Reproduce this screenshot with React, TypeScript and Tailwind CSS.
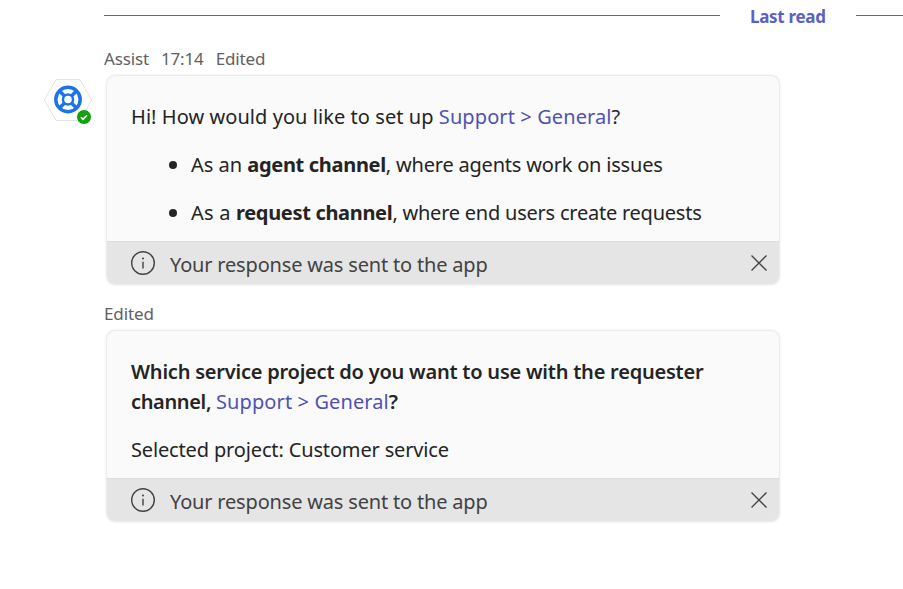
const font = { fontFamily: '"Noto Sans", sans-serif' };

const InfoIcon = () => (
  <svg width="26" height="26" viewBox="0 0 26 26" fill="none" className="shrink-0">
    <circle cx="13" cy="13" r="11.3" stroke="#424242" strokeWidth="1.4" />
    <circle cx="13" cy="8.6" r="1" fill="#424242" />
    <path d="M13 11.8v6.6" stroke="#424242" strokeWidth="1.4" />
  </svg>
);

const CloseIcon = () => (
  <svg width="18" height="18" viewBox="0 0 18 18" fill="none" className="shrink-0">
    <path d="M1.5 1.5l15 15M16.5 1.5l-15 15" stroke="#424242" strokeWidth="1.4" />
  </svg>
);

const Avatar = () => (
  <div className="relative h-[42px] w-[48px] shrink-0">
    <svg width="48" height="42" viewBox="0 0 48 42" fill="none">
      <path d="M12 0.5h24L47.500 21 36 41.500H12L0.500 21z" fill="#fff" stroke="#e3e3e3" />
      <circle cx="24" cy="20.500" r="12.200" stroke="#1a73e8" strokeWidth="3.500" />
      <circle cx="24" cy="20.500" r="5" stroke="#1a73e8" strokeWidth="2.500" />
      <path d="M16 12.500l4.500 4.500M32 12.500L27.500 17M16 28.500l4.500-4.500M32 28.500L27.500 24" stroke="#1a73e8" strokeWidth="3.500" />
    </svg>
    <div className="absolute left-[32px] top-[30px] h-[16px] w-[16px] rounded-full border border-white bg-[#13a10e]">
      <svg width="14" height="14" viewBox="0 0 14 14" fill="none">
        <path d="M4 7.300l2 2 4-4" stroke="#fff" strokeWidth="1.600" />
      </svg>
    </div>
  </div>
);

const Notice = () => (
  <div className="flex h-[43px] items-center rounded-b-[8px] border-t border-[#dcdcdc] bg-[#e5e5e5] pl-[23px] pr-[11px] text-[#424242]">
    <InfoIcon />
    <span className="ml-[14px] flex-1 pt-[3px] text-[20px] tracking-[-0.18px]">Your response was sent to the app</span>
    <CloseIcon />
  </div>
);

const Card = ({ children }: { children: React.ReactNode }) => (
  <div className="ml-[3px] w-[672px] rounded-[8px] bg-[#fafafa] shadow-[0_0_3px_rgba(0,0,0,0.22)]">
    {children}
    <Notice />
  </div>
);

const Link = ({ children }: { children: React.ReactNode }) => (
  <span className="font-normal tracking-[0.1px] text-[#4f52b2]">{children}</span>
);

const Bullet = ({ children }: { children: React.ReactNode }) => (
  <li className="flex items-center">
    <div className="mr-[14px] h-[8px] w-[8px] shrink-0 rounded-full bg-[#242424]" />
    <div>{children}</div>
  </li>
);

export default function App() {
  return (
    <div style={font} className="h-[589px] w-[903px] overflow-hidden bg-white text-[20px] leading-[30px] text-[#242424]">
      <div className="flex h-[32px] items-center pl-[104px]">
        <div className="-mt-[2px] h-px w-[616px] bg-[#5b5fc7]" />
        <div className="mx-[30px] w-[76px] whitespace-nowrap pt-[2px] text-[17px] font-bold tracking-[-0.3px] text-[#5b5fc7]">Last read</div>
        <div className="-mt-[2px] h-px flex-1 bg-[#5b5fc7]" />
      </div>
      <div className="flex pl-[44px] pt-[15px]">
        <div className="w-[60px] pt-[32px]">
          <Avatar />
        </div>
        <div>
          <div className="flex h-[24px] gap-[12px] text-[17px] leading-[24px] tracking-[-0.15px] text-[#616161]">
            <span>Assist</span>
            <span>17:14</span>
            <span>Edited</span>
          </div>
          <div className="mt-[5px]">
            <Card>
              <div className="px-[24px] pb-[13px] pt-[26px]">
                <p className="tracking-[0.06px]">
                  <span>Hi! How would you like to set up </span>
                  <Link>Support &gt; General</Link>
                  <span>?</span>
                </p>
                <ul className="mt-[18px] flex flex-col gap-[18px] pl-[38px] tracking-[-0.2px]">
                  <Bullet>
                    <span className="tracking-[0px]">As an </span>
                    <b className="font-bold tracking-[-0.32px]">agent channel</b>
                    <span>, where agents work on issues</span>
                  </Bullet>
                  <Bullet>
                    <span className="tracking-[0.2px]">As a </span>
                    <b className="font-bold tracking-[-0.32px]">request channel</b>
                    <span className="tracking-[-0.23px]">, where end users create requests</span>
                  </Bullet>
                </ul>
              </div>
            </Card>
          </div>
          <div className="mt-[18px] h-[24px] text-[17px] leading-[24px] tracking-[-0.1px] text-[#616161]">Edited</div>
          <div className="mt-[5px]">
            <Card>
              <div className="px-[24px] pb-[13px] pt-[26px]">
                <div className="font-semibold tracking-[-0.22px]">Which service project do you want to use with the requester</div>
                <div className="font-semibold tracking-[-0.22px]">
                  <span className="tracking-[-0.35px]">channel, </span>
                  <Link>Support &gt; General</Link>
                  <span>?</span>
                </div>
                <p className="mt-[18px] tracking-[-0.15px]">Selected project: Customer service</p>
              </div>
            </Card>
          </div>
        </div>
      </div>
    </div>
  );
}
